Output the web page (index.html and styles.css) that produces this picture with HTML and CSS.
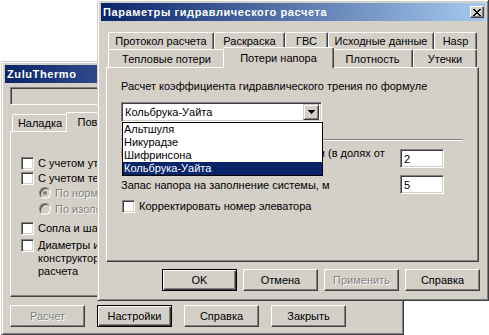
FILE: index.html
```html
<!DOCTYPE html>
<html lang="ru">
<head>
    <meta charset="UTF-8">
    <meta name="viewport" content="width=device-width, initial-scale=1.0">
    <title>Параметры гидравлического расчета</title>
    <link rel="stylesheet" href="styles.css">
</head>
<body>
<div class="desktop">

    <!-- Главное окно, на заднем плане -->
    <div class="win win-zulu">
        <div class="titlebar"><span>ZuluThermo</span></div>
        <div class="status-box"></div>

        <div class="tabs tabs-zulu">
            <div class="tab-row row-zulu">
                <div class="tab">Наладка</div>
                <div class="tab active">Поверочный расчет</div>
            </div>
        </div>

        <div class="panel panel-zulu">
            <label class="opt"><span class="cb"></span><span>С учетом утечек</span></label>
            <label class="opt gap-2"><span class="cb"></span><span>С учетом тепловых потерь</span></label>
            <label class="opt sub gap-2 disabled"><span class="radio checked"></span><span>По нормам</span></label>
            <label class="opt sub gap-3 disabled"><span class="radio"></span><span>По изоляции</span></label>
            <label class="opt gap-6"><span class="cb"></span><span>Сопла и шайбы</span></label>
            <label class="opt gap-4"><span class="cb"></span><span>Диаметры и шайбы из<br>конструкторского<br>расчета</span></label>
        </div>

        <div class="buttons buttons-zulu">
            <button class="btn" disabled>Расчет</button>
            <button class="btn default">Настройки</button>
            <button class="btn">Справка</button>
            <button class="btn">Закрыть</button>
        </div>
    </div>

    <!-- Диалог параметров -->
    <div class="win win-params">
        <div class="titlebar">
            <span>Параметры гидравлического расчета</span>
            <span class="tb-close">
                <svg width="8" height="7" viewBox="0 0 8 7"><path fill="#000" d="M0 0h2v1H0zM6 0h2v1H6zM1 1h2v1H1zM5 1h2v1H5zM2 2h4v1H2zM3 3h2v1H3zM2 4h4v1H2zM1 5h2v1H1zM5 5h2v1H5zM0 6h2v1H0zM6 6h2v1H6z"/></svg>
            </span>
        </div>

        <div class="tabs tabs-params">
            <div class="tab-row row-back">
                <div class="tab">Протокол расчета</div>
                <div class="tab">Раскраска</div>
                <div class="tab">ГВС</div>
                <div class="tab">Исходные данные</div>
                <div class="tab">Hasp</div>
            </div>
            <div class="tab-row row-front">
                <div class="tab">Тепловые потери</div>
                <div class="tab active">Потери напора</div>
                <div class="tab">Плотность</div>
                <div class="tab">Утечки</div>
            </div>
        </div>

        <div class="panel panel-params">
            <div>Расчет коэффициента гидравлического трения по формуле</div>

            <div class="combo">
                <div class="combo-value">Кольбрука-Уайта</div>
                <span class="combo-btn">
                    <svg width="7" height="4" viewBox="0 0 7 4"><path fill="#000" d="M0 0h7v1H0zM1 1h5v1H1zM2 2h3v1H2zM3 3h1v1H3z"/></svg>
                </span>
                <ul class="combo-list">
                    <li>Альтшуля</li>
                    <li>Никурадзе</li>
                    <li>Шифринсона</li>
                    <li class="selected">Кольбрука-Уайта</li>
                </ul>
            </div>

            <div class="separator"></div>

            <div class="param-row first">
                <div class="param-label">Коэффициент местных потерь для сети (в долях от</div>
                <div class="edit">2</div>
            </div>
            <div class="param-row">
                <div class="param-label">Запас напора на заполнение системы, м</div>
                <div class="edit">5</div>
            </div>

            <label class="opt opt-elev"><span class="cb"></span><span>Корректировать номер элеватора</span></label>
        </div>

        <div class="buttons buttons-params">
            <button class="btn default">OK</button>
            <button class="btn">Отмена</button>
            <button class="btn" disabled>Применить</button>
            <button class="btn">Справка</button>
        </div>
    </div>

</div>
</body>
</html>
```

FILE: styles.css
```css
* {
    box-sizing: border-box;
}

body {
    margin: 0;
    background: #fff;
    font-family: "Liberation Sans", Arial, sans-serif;
    font-size: 11px;
    line-height: 13px;
    color: #000;
}

.desktop {
    position: relative;
    width: 489px;
    height: 335px;
    overflow: hidden;
}

/* Окна в классическом стиле */
.win {
    position: absolute;
    z-index: 0;
    display: flex;
    flex-direction: column;
    background: #d4d0c8;
    border: 1px solid;
    border-color: #d4d0c8 #404040 #404040 #d4d0c8;
    box-shadow: inset 1px 1px #fff, inset -1px -1px #808080;
    padding: 3px;
}

.win-zulu {
    left: 1px;
    top: 61px;
    width: 403px;
    height: 274px;
}

.win-params {
    left: 97px;
    top: -1px;
    width: 392px;
    height: 302px;
}

.titlebar {
    flex: none;
    height: 18px;
    display: flex;
    align-items: center;
    justify-content: space-between;
    padding: 0 1px 0 2px;
    background: linear-gradient(to right, #0a246a, #a6caf0);
    color: #fff;
    font-weight: bold;
    letter-spacing: 0.6px;
    white-space: nowrap;
}

.tb-close {
    width: 14px;
    height: 12px;
    display: flex;
    align-items: center;
    justify-content: center;
    background: #d4d0c8;
    border: 1px solid;
    border-color: #fff #404040 #404040 #fff;
    box-shadow: inset -1px -1px #808080;
}

.status-box {
    flex: none;
    margin: 4px 0 0 5px;
    width: 385px;
    height: 18px;
    border: 1px solid;
    border-color: #808080 #fff #fff #808080;
    box-shadow: inset 1px 1px #404040, inset -1px -1px #d4d0c8;
}

/* Вкладки */
.tabs {
    flex: none;
    position: relative;
    z-index: 1;
}

.tabs-zulu {
    margin: 9px 0 0 7px;
}

.tabs-params {
    margin: 11px 0 0 7px;
}

.tab-row {
    display: grid;
    height: 17px;
}

.row-zulu {
    grid-template-columns: 56px 120px;
}

.row-back {
    grid-template-columns: 106px 71px 43px 106px 43px;
}

.row-front {
    height: 18px;
    grid-template-columns: 117px 107px 81px 64px;
}

.tab {
    display: flex;
    align-items: center;
    justify-content: center;
    padding-top: 1px;
    background: #d4d0c8;
    border: 1px solid;
    border-bottom: none;
    border-color: #fff #404040 transparent #fff;
    border-radius: 2px 2px 0 0;
    box-shadow: inset -1px 0 #808080;
    white-space: nowrap;
    overflow: hidden;
}

.tab.active {
    margin: -2px -2px -1px;
    z-index: 2;
    padding-top: 0;
}

.panel {
    flex: none;
    border: 1px solid;
    border-color: #fff #404040 #404040 #fff;
    box-shadow: inset -1px -1px #808080;
    display: flex;
    flex-direction: column;
    align-items: flex-start;
}

.panel-zulu {
    margin-left: 5px;
    width: 385px;
    height: 166px;
    padding: 25px 10px 0;
}

.panel-params {
    margin-left: 5px;
    width: 373px;
    height: 195px;
    padding: 12px 14px 0;
}

/* Флажки и переключатели */
.opt {
    display: flex;
    align-items: flex-start;
    gap: 4px;
    white-space: nowrap;
}

.opt.sub {
    padding-left: 18px;
}

.gap-2 { margin-top: 2px; }
.gap-3 { margin-top: 3px; }
.gap-4 { margin-top: 4px; }
.gap-6 { margin-top: 6px; }

.cb {
    flex: none;
    width: 13px;
    height: 13px;
    background: #fff;
    border: 1px solid;
    border-color: #808080 #fff #fff #808080;
    box-shadow: inset 1px 1px #404040, inset -1px -1px #d4d0c8;
}

.radio {
    flex: none;
    position: relative;
    width: 12px;
    height: 12px;
    border-radius: 50%;
    background: #d4d0c8;
    border: 1px solid;
    border-color: #808080 #fff #fff #808080;
    box-shadow: inset 1px 1px #404040;
}

.radio.checked::after {
    content: "";
    position: absolute;
    left: 3px;
    top: 3px;
    width: 4px;
    height: 4px;
    border-radius: 50%;
    background: #808080;
}

.disabled,
.btn:disabled {
    color: #808080;
    text-shadow: 1px 1px #fff;
}

/* Поля ввода */
.combo {
    position: relative;
    margin-top: 9px;
    width: 201px;
    height: 20px;
    display: flex;
    align-items: center;
    justify-content: space-between;
    background: #fff;
    border: 1px solid;
    border-color: #808080 #fff #fff #808080;
    box-shadow: inset 1px 1px #404040, inset -1px -1px #d4d0c8;
    padding: 0 2px 0 3px;
}

.combo-btn {
    width: 16px;
    height: 16px;
    display: flex;
    align-items: center;
    justify-content: center;
    background: #d4d0c8;
    border: 1px solid;
    border-color: #d4d0c8 #404040 #404040 #d4d0c8;
    box-shadow: inset 1px 1px #fff, inset -1px -1px #808080;
}

.combo-list {
    position: absolute;
    left: 0;
    top: 19px;
    width: 201px;
    margin: 0;
    padding: 0;
    list-style: none;
    background: #fff;
    border: 1px solid #000;
    z-index: 5;
}

.combo-list li {
    height: 13px;
    padding-left: 1px;
}

.combo-list li.selected {
    background: #0a246a;
    color: #fff;
}

.separator {
    margin-top: 17px;
    width: 342px;
    height: 2px;
    border-top: 1px solid #808080;
    border-bottom: 1px solid #fff;
}

.param-row {
    display: grid;
    grid-template-columns: 279px 44px;
    align-items: center;
    margin-top: 7px;
}

.param-row.first {
    margin-top: 8px;
    align-items: start;
}

.param-row.first .param-label {
    margin-top: -3px;
}

.param-row .param-label {
    white-space: nowrap;
    padding-top: 1px;
}

.edit {
    height: 19px;
    padding: 3px 3px 0;
    background: #fff;
    border: 1px solid;
    border-color: #808080 #fff #fff #808080;
    box-shadow: inset 1px 1px #404040, inset -1px -1px #d4d0c8;
}

.opt-elev {
    margin-top: 6px;
    margin-left: 1px;
}

/* Кнопки */
.buttons {
    flex: none;
    display: flex;
}

.buttons-zulu {
    margin: 8px 0 0 5px;
    gap: 12px;
}

.buttons-params {
    margin: 7px 5px 0 0;
    gap: 6px;
    justify-content: flex-end;
}

.btn {
    width: 75px;
    height: 22px;
    padding: 0;
    font: inherit;
    color: #000;
    background: #d4d0c8;
    border: 1px solid;
    border-color: #fff #404040 #404040 #fff;
    box-shadow: inset -1px -1px #808080;
}

.btn.default {
    border-color: #000;
    box-shadow: inset 1px 1px #fff, inset -1px -1px #404040, inset -2px -2px #808080;
}
```
